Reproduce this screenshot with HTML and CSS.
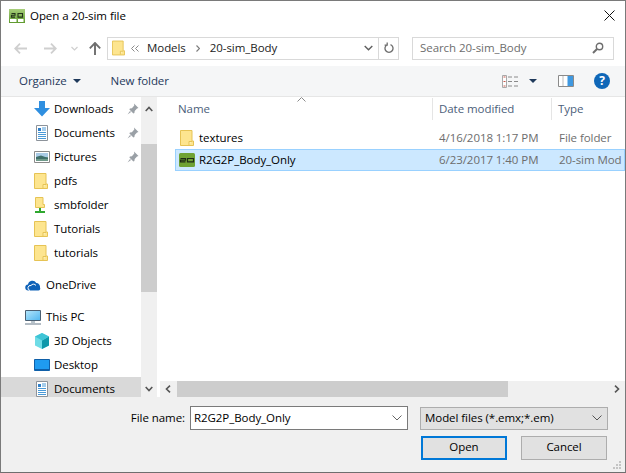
FILE: index.html
```html
<!DOCTYPE html>
<html lang="en">
<head>
<meta charset="utf-8">
<title>Open a 20-sim file</title>
<link rel="stylesheet" href="styles.css">
</head>
<body>
<svg class="defs" width="0" height="0" aria-hidden="true">
  <defs>
    <linearGradient id="titlegreen" x1="0" y1="0" x2="0" y2="1">
      <stop offset="0" stop-color="#a9cf7c"/>
      <stop offset="1" stop-color="#5f9a2e"/>
    </linearGradient>
    <linearGradient id="screen" x1="0" y1="0" x2="1" y2="1">
      <stop offset="0" stop-color="#b5e6fb"/>
      <stop offset="1" stop-color="#4fb6f0"/>
    </linearGradient>
  </defs>
  <symbol id="folder" viewBox="0 0 14 16">
    <path d="M.5.5h11.500v10.500h1.500v4.500H.5z" fill="#fde58f" stroke="#e6c354"/>
    <path d="M9 15V11.500h3" fill="#fdf0b8" stroke="#e6c354"/>
  </symbol>
  <symbol id="pin" viewBox="0 0 12 12">
    <path d="M7 .5l4.500 4.500-1.500.6-2.300 2.400-.3 2-1 .5-4-4 .5-1 2-.3L7.300 2.500z" fill="#9aa0a6"/>
    <path d="M3 8L.5 11.500 4 9z" fill="#9aa0a6"/>
  </symbol>
  <symbol id="doc" viewBox="0 0 16 16">
    <path d="M2.500.5h11v15h-11z" fill="#fff" stroke="#8d939a"/>
    <path d="M8 3h4M8 5h4M4 7.500h8M4 9.500h8M4 11.500h8M4 13.500h8" stroke="#4a9ad8"/>
    <path d="M4 3h3v3H4z" fill="#2f7fc9"/>
  </symbol>
</svg>

<main class="dialog">
  <header class="titlebar">
    <svg class="title-icon" width="16" height="14" viewBox="0 0 16 14">
      <rect width="16" height="14" fill="url(#titlegreen)"/>
      <path d="M2.500 4.500h3.500v1.800H2.500v1.800H6M9 4.500h4.500v3.600H9z" fill="none" stroke="#26351c" stroke-width="1.100"/>
      <path d="M1 10h6.500v3H1zM9 10h5.500v3H9z" fill="#fff"/>
    </svg>
    <span class="title">Open a 20-sim file</span>
    <svg class="close" width="11" height="11" viewBox="0 0 11 11"><path d="M.5.5l10 10M10.500.5l-10 10" stroke="#111" stroke-width="1"/></svg>
  </header>

  <nav class="navbar">
    <svg class="nav-back" width="13" height="11" viewBox="0 0 13 11"><path d="M6 .7L1.200 5.500 6 10.300M1.200 5.500H13" fill="none" stroke="#cfcfcf" stroke-width="1.800"/></svg>
    <svg class="nav-fwd" width="13" height="11" viewBox="0 0 13 11"><path d="M7 .7l4.800 4.800L7 10.300M11.800 5.500H0" fill="none" stroke="#cfcfcf" stroke-width="1.800"/></svg>
    <svg class="nav-down" width="7" height="5" viewBox="0 0 7 5"><path d="M.5 1l3 3 3-3" fill="none" stroke="#cfcfcf" stroke-width="1.200"/></svg>
    <svg class="nav-up" width="12" height="13" viewBox="0 0 12 13"><path d="M.8 6.300L6 1l5.200 5.300M6 1.200V13" fill="none" stroke="#6e6e6e" stroke-width="1.900"/></svg>
    <div class="address">
      <svg class="addr-folder" width="13" height="16"><use href="#folder"/></svg>
      <svg class="crumb-sep" width="8" height="7" viewBox="0 0 8 7"><path d="M3.500.5l-3 3 3 3M7.500.5l-3 3 3 3" fill="none" stroke="#8a8a8a"/></svg>
      <span class="crumb">Models</span>
      <svg class="crumb-arrow" width="4" height="7" viewBox="0 0 4 7"><path d="M.5.5l3 3-3 3" fill="none" stroke="#7c7c7c" stroke-width="1.200"/></svg>
      <span class="crumb">20-sim_Body</span>
      <svg class="addr-chevron" width="9" height="6" viewBox="0 0 9 6"><path d="M.7 1l3.800 3.800L8.300 1" fill="none" stroke="#5f5f5f" stroke-width="1.400"/></svg>
      <span class="addr-refresh">
        <svg width="10" height="12" viewBox="0 0 10 12"><path d="M3.500 2.600a4 4 0 1 0 3 0M3.200 .4v2.800H.6" fill="none" stroke="#6e6e6e" stroke-width="1.300"/></svg>
      </span>
    </div>
    <div class="search">
      <span class="search-text">Search 20-sim_Body</span>
      <svg width="12" height="12" viewBox="0 0 12 12"><circle cx="7.500" cy="4.500" r="3.200" fill="none" stroke="#6e6e6e" stroke-width="1.400"/><path d="M5 7l-4 4" stroke="#6e6e6e" stroke-width="2"/></svg>
    </div>
  </nav>

  <div class="toolbar">
    <span class="tool organize">Organize</span>
    <span class="caret organize-caret"></span>
    <span class="tool">New folder</span>
    <span class="toolbar-spacer"></span>
    <svg class="view-icon" width="17" height="13" viewBox="0 0 17 13">
      <path d="M.5.500h4v12h-4z" fill="#fff" stroke="#a9a9a9"/>
      <path d="M1.500 2h2M1.500 6.500h2M1.500 11h2" stroke="#c9584c"/>
      <path d="M6 2h4M12 2h4M6 6.500h4M12 6.500h4M6 11h4M12 11h4" stroke="#8a8a8a"/>
    </svg>
    <span class="caret view-caret"></span>
    <svg class="pane-icon" width="16" height="12" viewBox="0 0 16 12">
      <path d="M.5.500h15v11H.5z" fill="#fff" stroke="#8a8a8a"/>
      <path d="M9.500 1h5.500v10H9.500z" fill="#3f98e0"/>
      <path d="M5 1v10" stroke="#bdbdbd"/>
    </svg>
    <span class="help">?</span>
  </div>

  <div class="body">
    <aside class="sidepane">
      <ul class="tree">
        <li class="node">
          <svg class="ico" width="16" height="16" viewBox="0 0 16 16"><path d="M5 0h6v7h5l-8 8.500L0 7h5z" fill="#2f8fe0"/></svg>
          <span class="name">Downloads</span>
          <svg class="pin" width="12" height="12"><use href="#pin"/></svg>
        </li>
        <li class="node">
          <svg class="ico" width="16" height="16"><use href="#doc"/></svg>
          <span class="name">Documents</span>
          <svg class="pin" width="12" height="12"><use href="#pin"/></svg>
        </li>
        <li class="node">
          <svg class="ico" width="16" height="14" viewBox="0 0 16 14"><path d="M.5 1.500h15v11H.5z" fill="#fff" stroke="#8a8a8a"/><path d="M2 3h12v4H2z" fill="#a9cbe6"/><path d="M2 7h12v4H2z" fill="#6f9a8a"/><path d="M2 7l5-1.500 7 2.500v1H2z" fill="#3f6f6a"/></svg>
          <span class="name">Pictures</span>
          <svg class="pin" width="12" height="12"><use href="#pin"/></svg>
        </li>
        <li class="node">
          <svg class="ico" width="14" height="16"><use href="#folder"/></svg>
          <span class="name">pdfs</span>
        </li>
        <li class="node">
          <svg class="ico" width="14" height="17" viewBox="0 0 14 17"><path d="M1.500.5h7.500v7h1.500v3H1.500z" fill="#fde58f" stroke="#e6c354"/><path d="M6 11v3M1 15h10" stroke="#2fa82f" stroke-width="2"/></svg>
          <span class="name">smbfolder</span>
        </li>
        <li class="node">
          <svg class="ico" width="14" height="16"><use href="#folder"/></svg>
          <span class="name">Tutorials</span>
        </li>
        <li class="node">
          <svg class="ico" width="14" height="16"><use href="#folder"/></svg>
          <span class="name">tutorials</span>
        </li>
        <li class="node node-root group-start">
          <svg class="ico" width="16" height="11" viewBox="0 0 16 11"><path d="M3.500 10.500a3 3 0 0 1-.5-6 4.500 4.500 0 0 1 8.300-1.500 3.800 3.800 0 0 1 3.700 4.500c.8 1-.2 3-1.500 3z" fill="#0f62b8"/><path d="M5 10.500a2.500 2.500 0 0 1 1-5 3 3 0 0 1 5 0" fill="none" stroke="#fff"/></svg>
          <span class="name">OneDrive</span>
        </li>
        <li class="node node-root group-start">
          <svg class="ico" width="16" height="15" viewBox="0 0 16 15"><path d="M.5.500h15v10H.5z" fill="url(#screen)" stroke="#4a5f72"/><path d="M6 11h4v2H6z" fill="#b9c4cc"/><path d="M0 14h16" stroke="#9aa6b0" stroke-width="1.500"/></svg>
          <span class="name">This PC</span>
        </li>
        <li class="node">
          <svg class="ico" width="16" height="16" viewBox="0 0 16 16"><path d="M8 0l7 3.500v9L8 16l-7-3.500v-9z" fill="#6fdce6"/><path d="M8 7.500l7-4v9L8 16z" fill="#0f98aa"/><path d="M8 7.500L1 3.500 8 0l7 3.500z" fill="#3fc4d6"/></svg>
          <span class="name">3D Objects</span>
        </li>
        <li class="node">
          <svg class="ico" width="16" height="12" viewBox="0 0 16 12"><path d="M.5.500h15v11H.5z" fill="#1f9bf0" stroke="#0f5fa8"/><path d="M1 10.500h14" stroke="#0f5fa8"/></svg>
          <span class="name">Desktop</span>
        </li>
        <li class="node node-current">
          <svg class="ico" width="16" height="16"><use href="#doc"/></svg>
          <span class="name">Documents</span>
        </li>
      </ul>
      <div class="vscroll">
        <svg class="vs-btn" width="8" height="6" viewBox="0 0 8 6"><path d="M.7 5L4 1.500 7.300 5" fill="none" stroke="#555" stroke-width="1.600"/></svg>
        <span class="vs-thumb"></span>
        <svg class="vs-btn vs-down" width="8" height="6" viewBox="0 0 8 6"><path d="M.7 1L4 4.500 7.300 1" fill="none" stroke="#555" stroke-width="1.600"/></svg>
      </div>
    </aside>

    <section class="files">
      <div class="cols">
        <span class="col col-name">Name<svg class="sort" width="9" height="5" viewBox="0 0 9 5"><path d="M.5 4.500l4-4 4 4" fill="none" stroke="#8a8a8a"/></svg></span>
        <span class="col col-date">Date modified</span>
        <span class="col col-type">Type</span>
      </div>
      <div class="rows">
        <div class="row">
          <span class="cell-name"><svg width="14" height="16"><use href="#folder"/></svg><span class="fname">textures</span></span>
          <span class="cell-date">4/16/2018 1:17 PM</span>
          <span class="cell-type">File folder</span>
        </div>
        <div class="row row-selected">
          <span class="cell-name">
            <svg width="16" height="14" viewBox="0 0 16 14">
              <rect width="16" height="14" rx="1.500" fill="#6fa234"/>
              <path d="M1.500 5.500h5v1.700h-5v1.700h5M8.500 5.500h6v3.400h-6z" fill="none" stroke="#1f2a17" stroke-width="1.200"/>
            </svg>
            <span class="fname">R2G2P_Body_Only</span>
          </span>
          <span class="cell-date">6/23/2017 1:40 PM</span>
          <span class="cell-type">20-sim Mod</span>
        </div>
      </div>
      <div class="hscroll">
        <svg class="hs-btn" width="6" height="8" viewBox="0 0 6 8"><path d="M5 .7L1.500 4 5 7.300" fill="none" stroke="#555" stroke-width="1.600"/></svg>
        <span class="hs-thumb"></span>
        <svg class="hs-btn" width="6" height="8" viewBox="0 0 6 8"><path d="M1 .7L4.500 4 1 7.300" fill="none" stroke="#555" stroke-width="1.600"/></svg>
      </div>
    </section>
  </div>

  <footer class="footer">
    <div class="file-line">
      <label class="file-label">File name:</label>
      <div class="file-input">
        <span class="field-text">R2G2P_Body_Only</span>
        <svg width="10" height="6" viewBox="0 0 10 6"><path d="M.5.500L5 5 9.500.500" fill="none" stroke="#666"/></svg>
      </div>
      <div class="file-filter">
        <span class="field-text">Model files (*.emx;*.em)</span>
        <svg width="10" height="6" viewBox="0 0 10 6"><path d="M.5.500L5 5 9.500.500" fill="none" stroke="#555"/></svg>
      </div>
    </div>
    <div class="button-line">
      <button class="btn btn-default">Open</button>
      <button class="btn">Cancel</button>
    </div>
    <svg class="grip" width="9" height="9" viewBox="0 0 9 9"><path d="M6 0h2v2H6zM3 3h2v2H3zM6 3h2v2H6zM0 6h2v2H0zM3 6h2v2H3zM6 6h2v2H6z" fill="#c4c4c4"/></svg>
  </footer>
</main>
</body>
</html>
```

FILE: styles.css
```css
* { box-sizing: border-box; }
html, body { margin: 0; padding: 0; }
body { width: 626px; height: 473px; overflow: hidden; font-family: "Open Sans", "Liberation Sans", sans-serif; font-size: 11.5px; letter-spacing: -0.06px; color: #000; background: #fff; }
.defs { position: absolute; }
svg { display: block; flex: none; }

.dialog { width: 626px; height: 473px; border: 1px solid #7a7a7a; border-bottom-color: #6e6e6e; display: flex; flex-direction: column; background: #fff; }

.titlebar { height: 29px; flex: none; display: flex; align-items: center; padding-left: 8px; padding-right: 10px; }
.title { margin-left: 5px; font-size: 11.5px; flex: 1; }

.navbar { height: 36px; flex: none; display: flex; align-items: center; padding-left: 13px; }
.nav-fwd { margin-left: 17px; }
.nav-down { margin-left: 14px; }
.nav-up { margin-left: 11px; }
.address { width: 292px; height: 23px; margin-left: 6px; border: 1px solid #d9d9d9; display: flex; align-items: center; padding-left: 4px; color: #222; }
.crumb { padding-bottom: 2px; }
.crumb-sep { margin-left: 6px; margin-right: 8px; }
.crumb-arrow { margin: 0 10px; }
.addr-chevron { margin-left: auto; }
.addr-refresh { width: 20px; height: 21px; margin-left: 5px; border-left: 1px solid #d9d9d9; display: flex; align-items: center; justify-content: center; }
.search { width: 202px; height: 23px; margin-left: 13px; border: 1px solid #d9d9d9; display: flex; align-items: center; justify-content: space-between; padding: 0 9px 0 7px; color: #6d6d6d; }
.search-text { padding-bottom: 2px; }

.toolbar { height: 31px; flex: none; display: flex; align-items: center; padding-left: 18px; background: #f5f6f7; border-bottom: 1px solid #e6e6e6; color: #1e395b; }
.tool { padding-bottom: 2px; }
.caret { width: 0; height: 0; border-left: 4px solid transparent; border-right: 4px solid transparent; border-top: 4px solid #1e395b; }
.organize-caret { margin-left: 6px; margin-right: 30px; }
.toolbar-spacer { flex: 1; }
.view-caret { margin-left: 10px; margin-right: 21px; }
.help { width: 16px; height: 16px; margin-left: 20px; margin-right: 15px; border-radius: 50%; background: #0f67b8; color: #fff; font-weight: 700; font-size: 12px; line-height: 16px; text-align: center; }

.body { height: 300px; flex: none; display: flex; }

.sidepane { width: 159px; flex: none; display: flex; overflow: hidden; }
.tree { width: 140px; flex: none; height: 300px; margin: 0; padding: 0; list-style: none; overflow: hidden; }
.node { height: 24px; display: flex; align-items: center; padding-left: 33px; position: relative; color: #000; }
.node .ico { margin-right: 4px; }
.node .name { position: absolute; left: 53px; margin-top: -2px; }
.node .pin { position: absolute; left: 126px; top: 6px; }
.node-root { padding-left: 24px; }
.node-root .name { left: 45px; }
.group-start { margin-top: 8px; }
.node-current { background: #d9d9d9; }

.vscroll { width: 16px; flex: none; background: #f0f0f0; display: flex; flex-direction: column; align-items: center; margin-right: 3px; padding-top: 9px; }
.vs-thumb { width: 16px; height: 148px; margin-top: 32px; background: #cdcdcd; }
.vs-down { margin-top: auto; margin-bottom: 5px; }

.files { flex: 1; min-width: 0; display: flex; flex-direction: column; }
.cols { height: 25px; flex: none; display: flex; color: #4c607a; position: relative; }
.col { display: flex; align-items: center; height: 22px; margin-top: 1px; padding-bottom: 1px; border-right: 1px solid #e5e5e5; }
.col-name { width: 273px; padding-left: 18px; position: relative; }
.col-date { width: 119px; padding-left: 6px; }
.col-type { flex: 1; padding-left: 6px; border-right: 0; }
.sort { position: absolute; left: 137px; top: -1px; }

.rows { flex: 1; min-height: 0; padding: 5px 0 0 15px; overflow: hidden; }
.row { width: 450px; height: 22px; display: flex; align-items: center; border: 1px solid transparent; white-space: nowrap; overflow: hidden; color: #6d6d6d; }
.row-selected { background: #cce8ff; border-color: #99d1ff; }
.cell-name { width: 258px; flex: none; display: flex; align-items: center; color: #000; padding-left: 4px; }
.row-selected .cell-name { padding-left: 3px; }
.fname { margin-left: 5px; padding-bottom: 2px; }
.row-selected .fname { margin-left: 4px; }
.cell-date { width: 120px; flex: none; margin-left: 5px; padding-bottom: 2px; }
.cell-type { flex: none; padding-bottom: 2px; }

.hscroll { height: 16px; flex: none; display: flex; align-items: center; background: #f0f0f0; padding: 0 5px; }
.hs-thumb { width: 331px; height: 16px; margin-left: 6px; background: #cdcdcd; }
.hs-btn:last-child { margin-left: auto; }

.footer { flex: 1; min-height: 0; background: #f0f0f0; position: relative; padding: 9px 17px 0 0; }
.file-line { display: flex; align-items: center; height: 24px; }
.file-label { width: 189px; text-align: right; padding-right: 5px; padding-bottom: 2px; }
.field-text { padding-bottom: 2px; }
.file-input { width: 218px; height: 24px; background: #fff; border: 1px solid #7a7a7a; display: flex; align-items: center; justify-content: space-between; padding: 0 5px 0 3px; }
.file-filter { width: 188px; height: 23px; margin-left: 12px; background: #e1e1e1; border: 1px solid #adadad; display: flex; align-items: center; justify-content: space-between; padding: 0 5px 0 4px; }
.button-line { display: flex; justify-content: flex-end; gap: 14px; margin-top: 6px; padding-right: 1px; }
.btn { width: 86px; height: 24px; padding: 0 0 3px; background: #e1e1e1; border: 1px solid #adadad; font: inherit; letter-spacing: inherit; color: #000; }
.btn-default { border: 2px solid #0078d7; }
.grip { position: absolute; right: 3px; bottom: 2px; }
```
